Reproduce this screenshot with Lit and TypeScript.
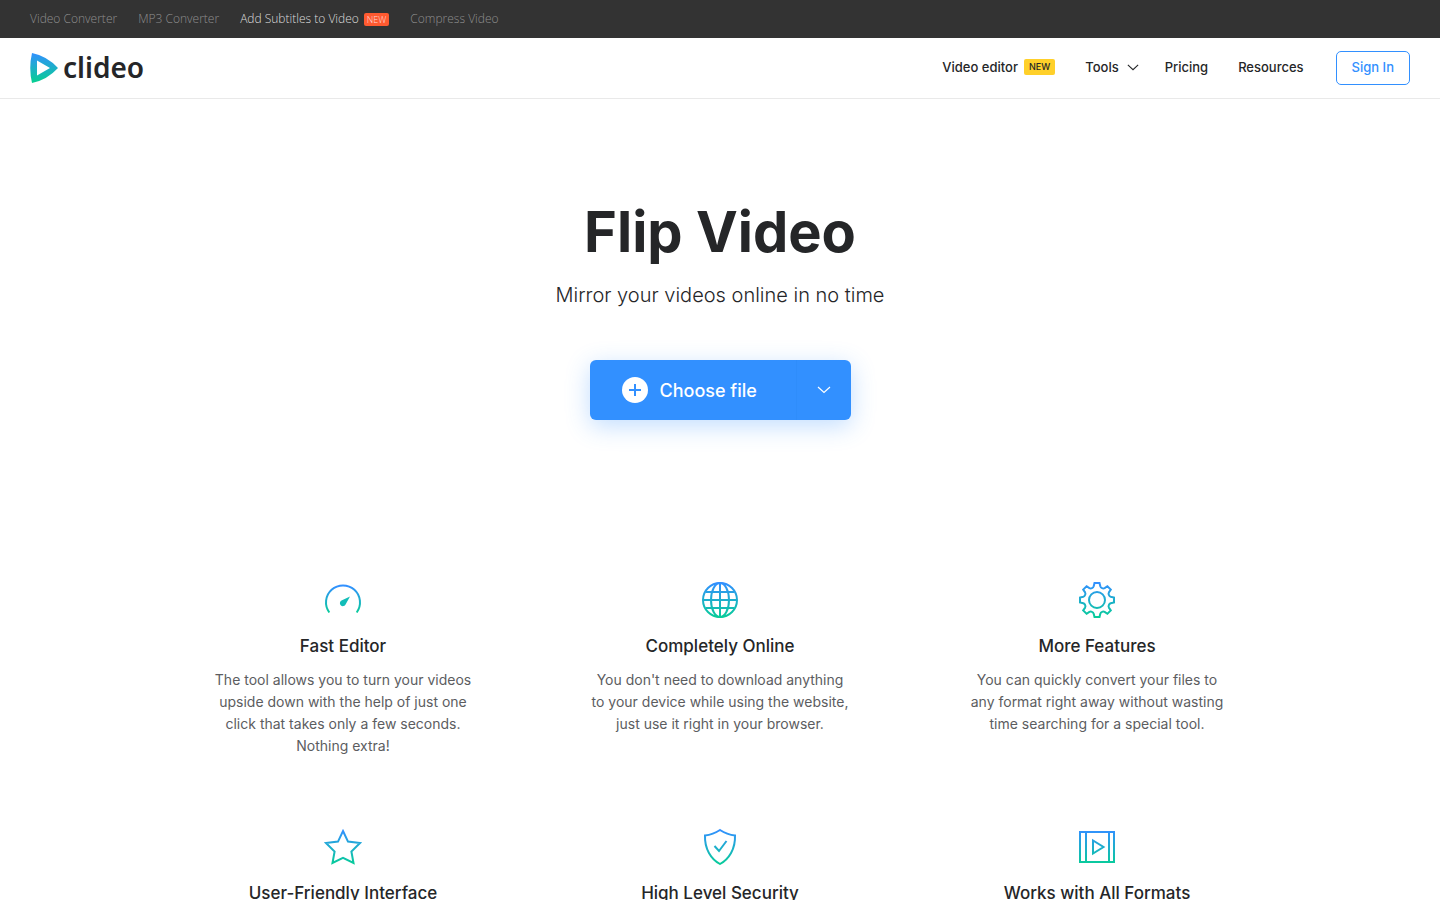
import { LitElement, html, css, svg, nothing } from "lit";
import { customElement } from "lit/decorators.js";

interface Feature {
  icon: string;
  title: string;
  text?: string;
}

const FEATURES: Feature[] = [
  {
    icon: "speed",
    title: "Fast Editor",
    text: "The tool allows you to turn your videos upside down with the help of just one click that takes only a few seconds. Nothing extra!",
  },
  {
    icon: "globe",
    title: "Completely Online",
    text: "You don't need to download anything to your device while using the website, just use it right in your browser.",
  },
  {
    icon: "gear",
    title: "More Features",
    text: "You can quickly convert your files to any format right away without wasting time searching for a special tool.",
  },
  { icon: "star", title: "User-Friendly Interface" },
  { icon: "shield", title: "High Level Security" },
  { icon: "film", title: "Works with All Formats" },
];

const ICONS: Record<string, unknown> = {
  speed: svg`
    <path d="M4.300 30.500A17 17 0 1 1 31.700 30.500" />
    <path class="solid" d="M25 14.500L20.700 22.200A3 3 0 1 1 17 18.300Z" />`,
  globe: svg`
    <circle cx="18" cy="18" r="17" />
    <ellipse cx="18" cy="18" rx="9" ry="17" />
    <path d="M18 1V35M1 18H35M4 10H32M4 26H32" />`,
  gear: svg`
    <circle cx="18" cy="18" r="8" />
    <path d="M15.500 1H20.500L21.300 4.300Q21.700 5.600 23 6.100Q24.400 6.800 25.600 6.100L28.400 4.200L31.800 7.600L29.900 10.400Q29.200 11.600 29.900 13Q30.400 14.300 31.700 14.700L35 15.500V20.500L31.700 21.300Q30.400 21.700 29.900 23Q29.200 24.400 29.900 25.600L31.800 28.400L28.400 31.800L25.600 29.900Q24.400 29.200 23 29.900Q21.700 30.400 21.300 31.700L20.500 35H15.500L14.700 31.700Q14.300 30.400 13 29.900Q11.600 29.200 10.400 29.900L7.600 31.800L4.200 28.400L6.100 25.600Q6.800 24.400 6.100 23Q5.600 21.700 4.300 21.300L1 20.500V15.500L4.300 14.700Q5.600 14.300 6.100 13Q6.800 11.600 6.100 10.400L4.200 7.600L7.600 4.200L10.400 6.100Q11.600 6.800 13 6.100Q14.300 5.600 14.700 4.300Z" />`,
  star: svg`<path d="M18 2L23 12.600L35 14L26.400 22.500L28.500 34L18 28.800L7.500 34L9.600 22.500L1 14L13 12.600Z" />`,
  shield: svg`
    <path d="M18 1Q25 5.500 33 6.500C33.500 20 27 30 18 35C9 30 2.500 20 3 6.500Q11 5.500 18 1Z" />
    <path d="M12.500 17L17 22L24.500 12" />`,
  film: svg`
    <path d="M1 3H35V33H1ZM7 3V33M30 3V33" />
    <path d="M14 11.500V24.500L24.500 18Z" />`,
};

const chevron = html`<svg class="chevron" viewBox="0 0 14 8" aria-hidden="true">
  <path d="M1 1L7 6.500L13 1" />
</svg>`;

@customElement("app-root")
export class AppRoot extends LitElement {
  static styles = css`
    :host {
      display: block;
      background: #fff;
      color: #252628;
      font-family: Inter, sans-serif;
    }
    a {
      color: inherit;
      text-decoration: none;
    }
    button {
      font: inherit;
      border: 0;
      cursor: pointer;
    }
    .promo {
      display: flex;
      align-items: center;
      gap: 21px;
      height: 38px;
      padding: 0 30px;
      background: #333;
      color: #8e8e8e;
      font: 300 12px/18px "Open Sans", sans-serif;
    }
    .promo .active {
      display: flex;
      align-items: center;
      gap: 5px;
      color: #ddd;
    }
    .hot {
      padding: 0 3px;
      border-radius: 2px;
      background: #ff5a30;
      color: #fdd;
      font-size: 9px;
      line-height: 13px;
    }
    .header {
      display: flex;
      align-items: center;
      justify-content: space-between;
      height: 60px;
      padding: 0 30px;
      border-bottom: 1px solid #e9e9e9;
    }
    .logo {
      display: flex;
      align-items: center;
      gap: 5px;
      font: 600 28px/36px "Noto Sans", sans-serif;
    }
    .mark {
      width: 28px;
      height: 30px;
    }
    .word {
      padding-bottom: 2px;
    }
    .nav {
      display: flex;
      align-items: center;
      gap: 30px;
      font-size: 13px;
      font-weight: 500;
      line-height: 20px;
    }
    .nav a,
    .tools {
      display: flex;
      align-items: center;
    }
    .tools {
      gap: 8px;
      padding: 0;
      background: none;
      color: inherit;
      margin-right: -4px;
    }
    .new {
      margin-left: 6px;
      padding: 0 5px;
      border-radius: 2px;
      background: #ffd02a;
      font-size: 9px;
      line-height: 16px;
    }
    .nav .signin {
      margin-left: 2px;
      padding: 5px 15px 7px;
      border: 1px solid #3290ff;
      border-radius: 5px;
      color: #3290ff;
    }
    .nav > :not(.signin) {
      padding-bottom: 2px;
    }
    .chevron {
      width: 12px;
      height: 7px;
      fill: none;
      stroke: currentColor;
      stroke-width: 1.3;
    }
    .hero {
      display: flex;
      flex-direction: column;
      align-items: center;
      padding: 97px 20px 0;
      text-align: center;
    }
    h1 {
      margin: 0;
      font-size: 56px;
      font-weight: 700;
      line-height: 72px;
    }
    .lead {
      margin: 12px 0 0;
      font-size: 20px;
      font-weight: 300;
      line-height: 30px;
    }
    .upload {
      display: flex;
      height: 60px;
      margin-top: 50px;
      border-radius: 6px;
      background: #3290ff;
      box-shadow: 0 6px 24px rgba(50, 144, 255, 0.3);
      color: #fff;
    }
    .upload button {
      display: flex;
      align-items: center;
      background: none;
      color: inherit;
    }
    .choose {
      gap: 12px;
      width: 206px;
      padding: 0 0 0 32px;
      font-size: 18px;
      font-weight: 500;
      white-space: nowrap;
    }
    .plus {
      width: 26px;
      height: 26px;
    }
    .upload .more {
      justify-content: center;
      width: 55px;
      padding: 0;
      border-left: 1px solid #2f8dfb;
    }
    .more .chevron {
      width: 14px;
      height: 8px;
      stroke-width: 1.2;
    }
    .features {
      display: grid;
      grid-template-columns: repeat(3, 1fr);
      gap: 71px 120px;
      max-width: 1011px;
      margin: 0 auto;
      padding-top: 161px;
      text-align: center;
    }
    .icon {
      display: block;
      width: 38px;
      height: 38px;
      margin: 0 auto;
      fill: none;
      stroke: url(#brand);
      stroke-width: 2;
    }
    .icon .solid {
      fill: #12bdb8;
      stroke: none;
    }
    h2 {
      margin: 14px 0 0;
      font-size: 17px;
      font-weight: 500;
      line-height: 26px;
    }
    .text {
      margin: 10px 0 0;
      color: #5c5d5f;
      font-size: 14px;
      line-height: 22px;
    }
  `;

  private icon(name: string) {
    const top = name === "speed" ? 4 : 1;
    const bottom = name === "speed" ? 31 : 35;
    return html`<svg class="icon" viewBox="-1 -1 38 38" aria-hidden="true">
      <defs>
        <linearGradient
          id="brand-${name}"
          gradientUnits="userSpaceOnUse"
          x1="0"
          y1=${top}
          x2="0"
          y2=${bottom}
        >
          <stop offset="0" stop-color="#3290ff" />
          <stop offset="1" stop-color="#08cc9a" />
        </linearGradient>
      </defs>
      <g stroke="url(#brand-${name})">${ICONS[name]}</g>
    </svg>`;
  }

  render() {
    return html`
      <nav class="promo" aria-label="Popular tools">
        <a href="#">Video Converter</a>
        <a href="#">MP3 Converter</a>
        <a href="#" class="active">Add Subtitles to Video<span class="hot">NEW</span></a>
        <a href="#">Compress Video</a>
      </nav>
      <header class="header">
        <a class="logo" href="#">
          <svg class="mark" viewBox="0 0 28 30" aria-hidden="true">
            <defs>
              <linearGradient id="play" x1="0" y1="0" x2="0" y2="1">
                <stop offset="0" stop-color="#3290ff" />
                <stop offset="1" stop-color="#06d08f" />
              </linearGradient>
            </defs>
            <path
              fill="url(#play)"
              fill-rule="evenodd"
              d="M2 0Q17 3 28 15Q17 27 2 30Q-1.500 15 2 0ZM7 7.500V22.500L20 15Z"
            />
          </svg>
          <span class="word">clideo</span>
        </a>
        <nav class="nav" aria-label="Main">
          <a href="#">Video editor<span class="new">NEW</span></a>
          <button class="tools">Tools ${chevron}</button>
          <a href="#">Pricing</a>
          <a href="#">Resources</a>
          <a href="#" class="signin">Sign In</a>
        </nav>
      </header>
      <main>
        <section class="hero">
          <h1>Flip Video</h1>
          <p class="lead">Mirror your videos online in no time</p>
          <div class="upload">
            <button class="choose">
              <svg class="plus" viewBox="0 0 26 26" aria-hidden="true">
                <circle cx="13" cy="13" r="13" fill="#fff" />
                <path d="M13 7V19M7 13H19" stroke="#3290ff" stroke-width="2" />
              </svg>
              Choose file
            </button>
            <button class="more" aria-label="More sources">${chevron}</button>
          </div>
        </section>
        <section class="features">
          ${FEATURES.map(
            (f) => html`<article>
              ${this.icon(f.icon)}
              <h2>${f.title}</h2>
              ${f.text ? html`<p class="text">${f.text}</p>` : nothing}
            </article>`
          )}
        </section>
      </main>
    `;
  }
}
